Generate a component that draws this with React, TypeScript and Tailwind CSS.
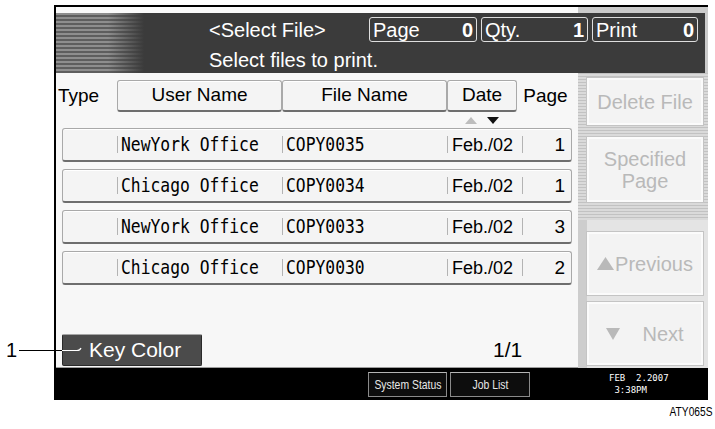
import React from "react";

interface StoredFile {
  user: string;
  file: string;
  date: string;
  pages: number;
}

const files: StoredFile[] = [
  { user: "NewYork Office", file: "COPY0035", date: "Feb./02", pages: 1 },
  { user: "Chicago Office", file: "COPY0034", date: "Feb./02", pages: 1 },
  { user: "NewYork Office", file: "COPY0033", date: "Feb./02", pages: 3 },
  { user: "Chicago Office", file: "COPY0030", date: "Feb./02", pages: 2 },
];

const Sep = () => <span className="w-px h-[17px] bg-[#b3b3b3] shrink-0" />;

const Mono = ({ children }: { children: React.ReactNode }) => (
  <span className="ml-[3px] inline-block origin-left scale-x-[0.86] whitespace-pre font-['DejaVu_Sans_Mono',monospace] text-[19px] leading-none text-black">
    {children}
  </span>
);

const FileRow = ({ user, file, date, pages }: StoredFile) => (
  <div className="h-[34px] flex items-center rounded-[3px] border border-[#a9a9a9] border-b-2 border-b-[#6e6e6e] bg-[#f4f4f4] shadow-[inset_0_1px_0_#ffffff]">
    <div className="w-[54px] shrink-0" />
    <div className="w-[165px] shrink-0 flex items-center">
      <Sep />
      <Mono>{user}</Mono>
    </div>
    <div className="w-[165px] shrink-0 flex items-center">
      <Sep />
      <Mono>{file}</Mono>
    </div>
    <div className="w-[75px] shrink-0 flex items-center">
      <Sep />
      <span className="ml-[4px] text-[18px] leading-none">{date}</span>
    </div>
    <div className="flex-1 flex items-center">
      <Sep />
      <span className="ml-auto pr-[6px] text-[19px] leading-none">{pages}</span>
    </div>
  </div>
);

const HeadButton = ({ width, children }: { width: string; children: React.ReactNode }) => (
  <div
    className={`${width} h-[32px] shrink-0 flex items-center justify-center rounded-[3px] border border-[#a9a9a9] border-b-2 border-b-[#6e6e6e] bg-[#f4f4f4] shadow-[inset_0_1px_0_#ffffff] text-[19px]`}
  >
    {children}
  </div>
);

const CounterBox = ({ label, value, width }: { label: string; value: number; width: string }) => (
  <div className={`${width} h-[25px] flex items-center justify-between rounded-[3px] border border-[#dedede] px-[3px] text-[20px] leading-none text-white`}>
    <span>{label}</span>
    <span className="font-bold">{value}</span>
  </div>
);

const SideButton = ({ height, children }: { height: string; children: React.ReactNode }) => (
  <div
    className={`${height} w-[116px] flex flex-col items-center justify-center border-2 border-[#fbfbfb] outline outline-1 outline-[#c4c4c4] bg-[#f3f3f3] text-[20px] leading-[22px] text-[#b9b9b9]`}
  >
    {children}
  </div>
);

const BarButton = ({ width, children }: { width: string; children: React.ReactNode }) => (
  <div
    className={`${width} h-[25px] flex items-center justify-center border border-[#8a8a8a] border-t-[#b5b5b5] bg-[#0d0d0d]`}
  >
    <span className="inline-block scale-x-[0.8] whitespace-nowrap text-[13px] leading-none text-[#e8e8e8]">{children}</span>
  </div>
);

export default function App() {
  return (
    <div className="relative w-[715px] h-[429px] bg-white font-['Liberation_Sans',Arial,sans-serif] text-black">
      <div className="pt-[5px] pl-[54px]">
        <div className="w-[654px] border-l-2 border-t-2 border-black flex flex-col">
          {/* title strip */}
          <div className="h-[66px] flex bg-[linear-gradient(to_right,#fafafa_522px,#cbcbcb_522px)]">
            <div className="mt-[6px] mr-[3px] h-[60px] flex-1 flex flex-col bg-[#3b3b3b] bg-[linear-gradient(to_right,transparent_52px,#3b3b3b_88px),repeating-linear-gradient(to_bottom,#8e8e8e_0_2px,#5e5e5e_2px_4px)]">
              <div className="flex items-center pt-[4px] pl-[153px]">
                <span className="w-[160px] text-[20px] leading-none text-white">&lt;Select File&gt;</span>
                <div className="flex gap-[4px]">
                  <CounterBox label="Page" value={0} width="w-[108px]" />
                  <CounterBox label="Qty." value={1} width="w-[107px]" />
                  <CounterBox label="Print" value={0} width="w-[106px]" />
                </div>
              </div>
              <span className="pl-[153px] mt-[8px] text-[20px] leading-none text-white">Select files to print.</span>
            </div>
          </div>

          {/* body */}
          <div className="h-[295px] flex">
            <div className="w-[522px] flex flex-col bg-[#f7f7f7] border-b border-[#9d9d9d]">
              <div className="mt-[7px] flex items-center pl-[2px] pr-[4px]">
                <span className="w-[59px] text-[19px]">Type</span>
                <HeadButton width="w-[165px]">User Name</HeadButton>
                <HeadButton width="w-[165px]">File Name</HeadButton>
                <HeadButton width="w-[70px]">Date</HeadButton>
                <span className="flex-1 text-center text-[19px]">Page</span>
              </div>
              <div className="h-[16px] flex items-start pl-[409px] pt-[5px] gap-[10px]">
                <svg width="12" height="7" viewBox="0 0 12 7">
                  <path d="M0 7 L6 0 L12 7 Z" fill="#bdbdbd" />
                </svg>
                <svg width="12" height="7" viewBox="0 0 12 7">
                  <path d="M0 0 L12 0 L6 7 Z" fill="#111" />
                </svg>
              </div>
              <div className="flex flex-col gap-[7px] px-[6px]">
                {files.map((f) => (
                  <FileRow key={f.file} {...f} />
                ))}
              </div>
              <div className="mt-auto mb-[1px] h-[32px] flex items-center pl-[6px]">
                <div className="w-[140px] h-[32px] flex items-center pl-[26px] rounded-[2px] border border-[#2a2a2a] border-t-[#a5a5a5] bg-[#4b4b4b] text-[21px] text-white">
                  Key Color
                </div>
                <span className="ml-[291px] text-[21px]">1/1</span>
              </div>
            </div>

            {/* right column */}
            <div className="w-[130px] flex flex-col">
              <div className="h-[147px] flex flex-col pl-[9px] pt-[5px] bg-[repeating-linear-gradient(to_bottom,#c2c2c2_0_1px,#dadada_1px_3px)]">
                <SideButton height="h-[47px]">Delete File</SideButton>
                <div className="h-[12px]" />
                <SideButton height="h-[65px]">
                  <span>Specified</span>
                  <span>Page</span>
                </SideButton>
              </div>
              <div className="flex-1 flex flex-col pt-[12px] border-l-[9px] border-[#cdcdcd] bg-[#e4e4e4] gap-[7px]">
                <SideButton height="h-[63px]">
                  <span className="flex items-center">
                    <svg width="17" height="13" viewBox="0 0 17 13" className="mr-[1px]">
                      <path d="M0 13 L8.5 0 L17 13 Z" fill="#b9b9b9" />
                    </svg>
                    Previous
                  </span>
                </SideButton>
                <SideButton height="h-[63px]">
                  <span className="flex items-center">
                    <svg width="14" height="12" viewBox="0 0 14 12" className="mr-[22px]">
                      <path d="M0 0 L14 0 L7 12 Z" fill="#b9b9b9" />
                    </svg>
                    Next
                  </span>
                </SideButton>
              </div>
            </div>
          </div>

          {/* status bar */}
          <div className="h-[32px] flex items-start bg-black pl-[312px] pt-[4px]">
            <BarButton width="w-[79px]">System Status</BarButton>
            <BarButton width="w-[80px] ml-[3px]">Job List</BarButton>
            <div className="ml-[79px] flex flex-col font-['DejaVu_Sans_Mono',monospace] text-[9px] leading-[12px] text-white">
              <span className="whitespace-pre">FEB  2.2007</span>
              <span className="whitespace-pre"> 3:38PM</span>
            </div>
          </div>
        </div>
      </div>

      <div className="flex justify-end pr-[3px] mt-[6px]">
        <span className="inline-block origin-right scale-x-[0.85] text-[12px] leading-none">ATY065S</span>
      </div>

      {/* callout */}
      <span className="absolute left-[6px] top-[340px] text-[20px] leading-none">1</span>
      <svg className="absolute left-0 top-[340px]" width="90" height="20" viewBox="0 0 90 20">
        <path d="M19 10.5 H62" stroke="#000" strokeWidth="1.2" fill="none" />
        <path d="M62 10.5 H77 Q80 10.5 81 8" stroke="#fff" strokeWidth="1.2" fill="none" />
      </svg>
    </div>
  );
}
